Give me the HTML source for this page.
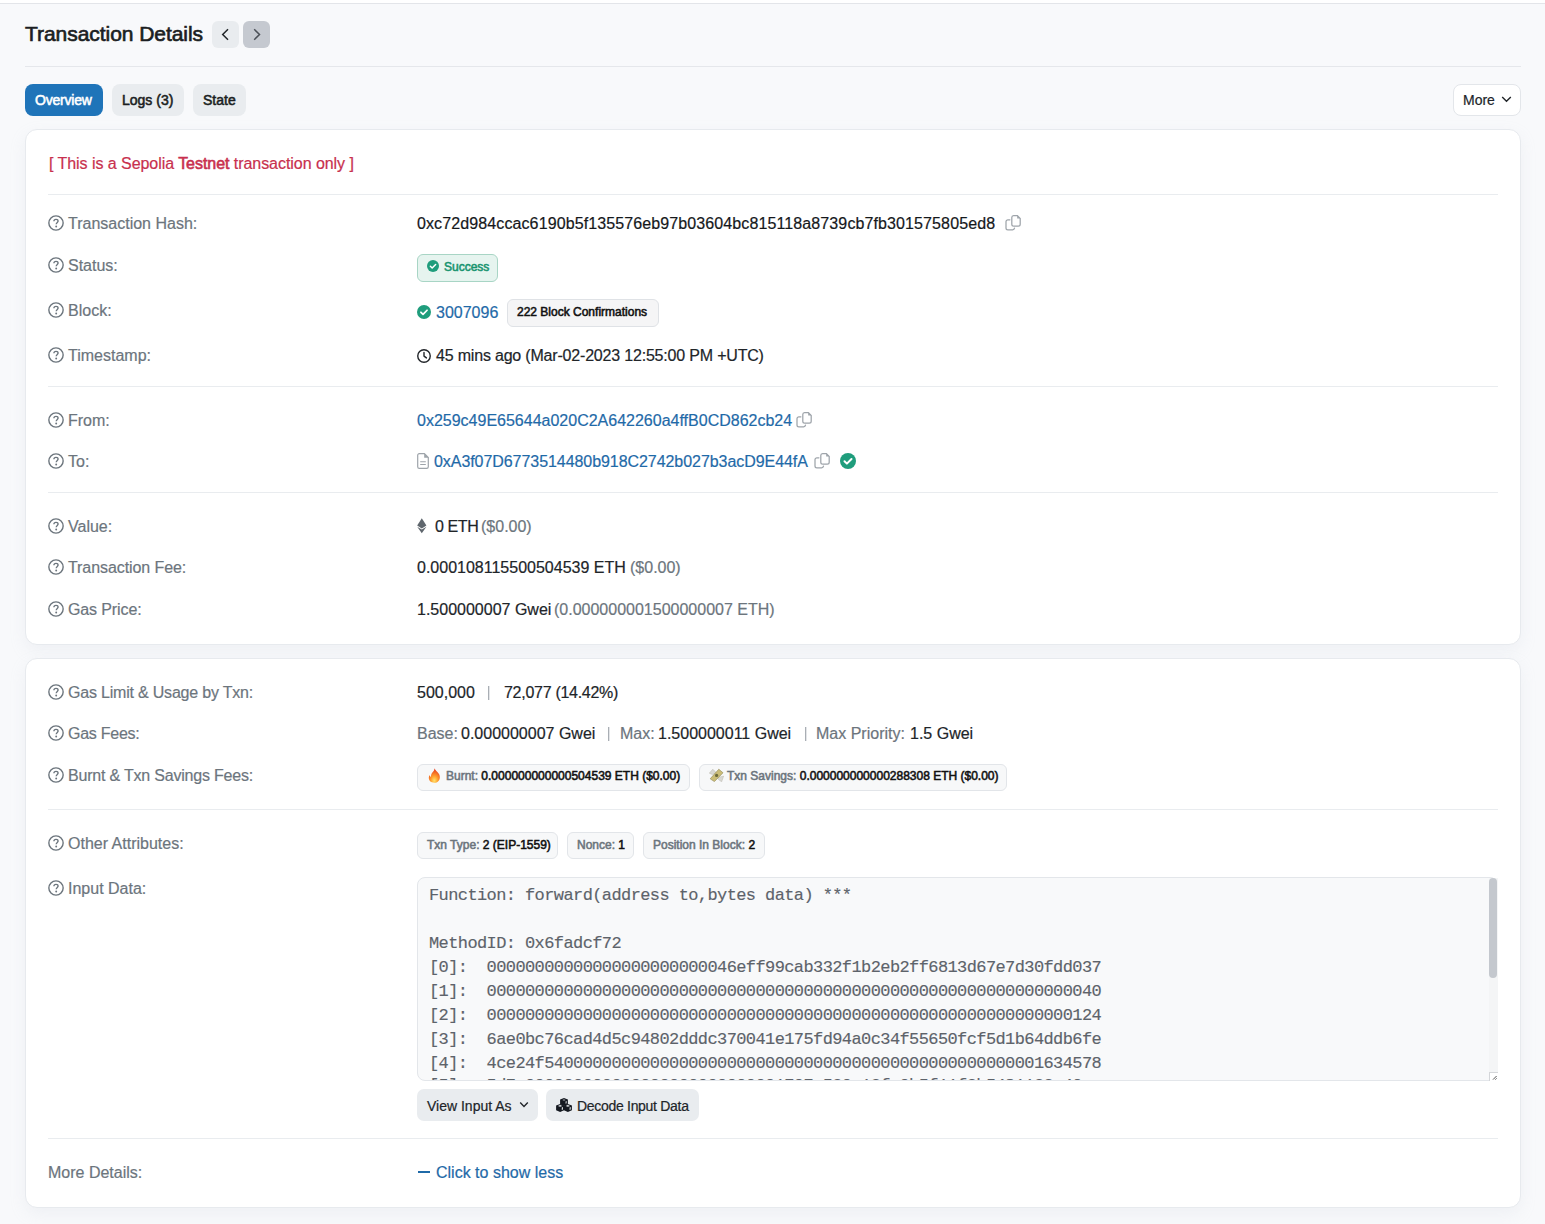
<!DOCTYPE html>
<html><head><meta charset="utf-8"><title>Transaction Details</title><style>
*{box-sizing:border-box}
html,body{margin:0;padding:0}
body{width:1545px;height:1224px;overflow:hidden;background:#f8f9fb;font-family:"Liberation Sans",sans-serif;color:#212529;position:relative;font-size:16px}
.a{position:absolute;white-space:nowrap}
.t{position:absolute;white-space:nowrap;height:20px;line-height:20px;font-size:16px;-webkit-text-stroke:0.2px currentColor}
.md{-webkit-text-stroke:0.55px currentColor}
.hr{position:absolute;height:1px;background:#e9ecef}
.card{position:absolute;left:25px;width:1496px;background:#fff;border:1px solid #e7eaee;border-radius:12px;box-shadow:0 6px 16px rgba(189,197,209,.15)}
.badge{position:absolute;border-radius:6px;border:1px solid #e2e5e9;background:#f7f8f9}
.bt{position:absolute;white-space:nowrap;font-size:12px;line-height:14px;height:14px;-webkit-text-stroke:0.55px currentColor}
.muted{color:#6c757d}
.link{color:#1f6aa8}
.sepl{position:absolute;width:1px;height:14px;background:#a9aeb4;box-shadow:1px 0 0 #e3e5e8}
.inbox{position:absolute;left:417px;top:877px;width:1081px;height:204px;background:#f8f9fa;border:1px solid #e3e6ea;border-radius:8px;overflow:hidden}
.code{margin:0;position:absolute;left:11px;top:6px;font-family:"Liberation Mono",monospace;font-size:17px;letter-spacing:-0.6px;line-height:24px;color:#5d636a;white-space:pre;-webkit-text-stroke:0.15px currentColor}
.btn{position:absolute;height:32px;border-radius:7px;background:#e9ecef}
</style></head><body>
<div class="a" style="left:0;top:0;width:1545px;height:3px;background:#fff"></div>
<div class="a" style="left:0;top:3px;width:1545px;height:1px;background:#e3e5e9"></div>
<div class="a" style="left:25px;top:19px;font-size:21px;line-height:30px;color:#1b1e22;-webkit-text-stroke:0.65px #1b1e22;letter-spacing:-0.05px">Transaction Details</div>
<div class="a" style="left:212px;top:21px;width:27px;height:27px;border-radius:6px;background:#e9ecef"></div>
<svg class="a" style="left:212px;top:21px" width="27" height="27" viewBox="0 0 27 27"><path d="M16 8.3 L10.7 13.5 L16 18.7" fill="none" stroke="#212529" stroke-width="1.5"/></svg>
<div class="a" style="left:243px;top:21px;width:27px;height:27px;border-radius:6px;background:#c5c9d0"></div>
<svg class="a" style="left:243px;top:21px" width="27" height="27" viewBox="0 0 27 27"><path d="M11.2 8.3 L16.5 13.5 L11.2 18.7" fill="none" stroke="#4b5057" stroke-width="1.5"/></svg>
<div class="hr" style="left:25px;top:66px;width:1496px;background:#e5e7eb"></div>
<div class="a" style="left:25px;top:84px;width:78px;height:32px;border-radius:8px;background:#1f74b9"></div>
<div class="a md" style="left:35px;top:92px;font-size:14px;line-height:17px;color:#fff;-webkit-text-stroke:0.55px #fff;letter-spacing:-0.2px">Overview</div>
<div class="a" style="left:112px;top:84px;width:72px;height:32px;border-radius:8px;background:#e9ecef"></div>
<div class="a md" style="left:122px;top:92px;font-size:14px;line-height:17px;color:#1b1e22">Logs (3)</div>
<div class="a" style="left:193px;top:84px;width:53px;height:32px;border-radius:8px;background:#e9ecef"></div>
<div class="a md" style="left:203px;top:92px;font-size:14px;line-height:17px;color:#1b1e22">State</div>
<div class="a" style="left:1453px;top:84px;width:68px;height:32px;border-radius:8px;background:#fff;border:1px solid #e3e6ea"></div>
<div class="a" style="left:1463px;top:92px;font-size:14px;line-height:17px;color:#212529;-webkit-text-stroke:0.2px #212529">More</div>
<svg class="a" style="left:1501px;top:95px" width="11" height="8" viewBox="0 0 11 8"><path d="M1.2 2 L5.5 6.2 L9.8 2" fill="none" stroke="#212529" stroke-width="1.4"/></svg>
<div class="card" style="top:129px;height:516px"></div>
<div class="t" style="left:49px;top:154px;color:#c8304e;letter-spacing:-0.05px">[ This is a Sepolia <span style="-webkit-text-stroke:0.6px currentColor">Testnet</span> transaction only ]</div>
<div class="hr" style="left:48px;top:194px;width:1450px"></div>
<svg class="a" style="left:48px;top:215px" width="16" height="16" viewBox="0 0 16 16"><circle cx="8" cy="8" r="7.15" fill="none" stroke="#6c757d" stroke-width="1.4"/><path d="M5.9 6.3 C5.9 5 6.8 4.3 8 4.3 C9.2 4.3 10.1 5.1 10.1 6.1 C10.1 7.3 8.2 7.6 8.2 9.2" fill="none" stroke="#6c757d" stroke-width="1.35"/><circle cx="8.2" cy="11.5" r="0.95" fill="#6c757d"/></svg>
<div class="t muted" style="left:68px;top:214px;letter-spacing:0px">Transaction Hash:</div>
<div class="t " style="left:417px;top:214px;letter-spacing:0.11px;color:#15181b">0xc72d984ccac6190b5f135576eb97b03604bc815118a8739cb7fb301575805ed8</div>
<svg class="a" style="left:1004px;top:213px" width="18" height="18" viewBox="0 0 18 18"><path d="M9.6 2.6 H13.4 L16.2 5.4 V11.3 A1.9 1.9 0 0 1 14.3 13.2 H9.7 A1.9 1.9 0 0 1 7.8 11.3 V4.5 A1.9 1.9 0 0 1 9.6 2.6 Z" fill="none" stroke="#9ea4aa" stroke-width="1.25"/><path d="M13.2 2.4 L16.4 5.6 H13.2 Z" fill="#9ea4aa"/><path d="M5.9 6.8 H3.9 A1.9 1.9 0 0 0 2 8.7 V14.9 A1.9 1.9 0 0 0 3.9 16.8 H8.6 A1.9 1.9 0 0 0 10.5 15.2" fill="none" stroke="#9ea4aa" stroke-width="1.25" stroke-linecap="round"/></svg>
<svg class="a" style="left:48px;top:257px" width="16" height="16" viewBox="0 0 16 16"><circle cx="8" cy="8" r="7.15" fill="none" stroke="#6c757d" stroke-width="1.4"/><path d="M5.9 6.3 C5.9 5 6.8 4.3 8 4.3 C9.2 4.3 10.1 5.1 10.1 6.1 C10.1 7.3 8.2 7.6 8.2 9.2" fill="none" stroke="#6c757d" stroke-width="1.35"/><circle cx="8.2" cy="11.5" r="0.95" fill="#6c757d"/></svg>
<div class="t muted" style="left:68px;top:256px;letter-spacing:0px">Status:</div>
<div class="badge" style="left:417px;top:254px;width:81px;height:28px;background:#e6f4ef;border-color:#a8d5c5;"></div>
<svg class="a" style="left:427px;top:260px" width="12" height="12" viewBox="0 0 16 16"><circle cx="8" cy="8" r="8" fill="#1f9d7c"/><path d="M4.5 8.3 L6.9 10.6 L11.5 6" fill="none" stroke="#fff" stroke-width="2" stroke-linecap="round" stroke-linejoin="round"/></svg>
<div class="bt" style="left:444px;top:260px;color:#199470">Success</div>
<svg class="a" style="left:48px;top:302px" width="16" height="16" viewBox="0 0 16 16"><circle cx="8" cy="8" r="7.15" fill="none" stroke="#6c757d" stroke-width="1.4"/><path d="M5.9 6.3 C5.9 5 6.8 4.3 8 4.3 C9.2 4.3 10.1 5.1 10.1 6.1 C10.1 7.3 8.2 7.6 8.2 9.2" fill="none" stroke="#6c757d" stroke-width="1.35"/><circle cx="8.2" cy="11.5" r="0.95" fill="#6c757d"/></svg>
<div class="t muted" style="left:68px;top:301px;letter-spacing:0px">Block:</div>
<svg class="a" style="left:417px;top:305px" width="14" height="14" viewBox="0 0 16 16"><circle cx="8" cy="8" r="8" fill="#1f9d7c"/><path d="M4.5 8.3 L6.9 10.6 L11.5 6" fill="none" stroke="#fff" stroke-width="2" stroke-linecap="round" stroke-linejoin="round"/></svg>
<div class="t link" style="left:436px;top:303px;">3007096</div>
<div class="badge" style="left:507px;top:299px;width:152px;height:28px;background:#f5f5f6;border-color:#dfe2e6;"></div>
<div class="bt" style="left:517px;top:305px;color:#111">222 Block Confirmations</div>
<svg class="a" style="left:48px;top:347px" width="16" height="16" viewBox="0 0 16 16"><circle cx="8" cy="8" r="7.15" fill="none" stroke="#6c757d" stroke-width="1.4"/><path d="M5.9 6.3 C5.9 5 6.8 4.3 8 4.3 C9.2 4.3 10.1 5.1 10.1 6.1 C10.1 7.3 8.2 7.6 8.2 9.2" fill="none" stroke="#6c757d" stroke-width="1.35"/><circle cx="8.2" cy="11.5" r="0.95" fill="#6c757d"/></svg>
<div class="t muted" style="left:68px;top:346px;letter-spacing:0px">Timestamp:</div>
<svg class="a" style="left:417px;top:349px" width="14" height="14" viewBox="0 0 14 14"><circle cx="7" cy="7" r="6.25" fill="none" stroke="#212529" stroke-width="1.4"/><path d="M7 3.4 V7.1 L9.4 8.9" fill="none" stroke="#212529" stroke-width="1.4" stroke-linecap="round" stroke-linejoin="round"/></svg>
<div class="t " style="left:436px;top:346px;letter-spacing:-0.19px">45 mins ago (Mar-02-2023 12:55:00 PM +UTC)</div>
<div class="hr" style="left:48px;top:386px;width:1450px"></div>
<svg class="a" style="left:48px;top:412px" width="16" height="16" viewBox="0 0 16 16"><circle cx="8" cy="8" r="7.15" fill="none" stroke="#6c757d" stroke-width="1.4"/><path d="M5.9 6.3 C5.9 5 6.8 4.3 8 4.3 C9.2 4.3 10.1 5.1 10.1 6.1 C10.1 7.3 8.2 7.6 8.2 9.2" fill="none" stroke="#6c757d" stroke-width="1.35"/><circle cx="8.2" cy="11.5" r="0.95" fill="#6c757d"/></svg>
<div class="t muted" style="left:68px;top:411px;letter-spacing:0px">From:</div>
<div class="t link" style="left:417px;top:411px;">0x259c49E65644a020C2A642260a4ffB0CD862cb24</div>
<svg class="a" style="left:795px;top:410px" width="18" height="18" viewBox="0 0 18 18"><path d="M9.6 2.6 H13.4 L16.2 5.4 V11.3 A1.9 1.9 0 0 1 14.3 13.2 H9.7 A1.9 1.9 0 0 1 7.8 11.3 V4.5 A1.9 1.9 0 0 1 9.6 2.6 Z" fill="none" stroke="#9ea4aa" stroke-width="1.25"/><path d="M13.2 2.4 L16.4 5.6 H13.2 Z" fill="#9ea4aa"/><path d="M5.9 6.8 H3.9 A1.9 1.9 0 0 0 2 8.7 V14.9 A1.9 1.9 0 0 0 3.9 16.8 H8.6 A1.9 1.9 0 0 0 10.5 15.2" fill="none" stroke="#9ea4aa" stroke-width="1.25" stroke-linecap="round"/></svg>
<svg class="a" style="left:48px;top:453px" width="16" height="16" viewBox="0 0 16 16"><circle cx="8" cy="8" r="7.15" fill="none" stroke="#6c757d" stroke-width="1.4"/><path d="M5.9 6.3 C5.9 5 6.8 4.3 8 4.3 C9.2 4.3 10.1 5.1 10.1 6.1 C10.1 7.3 8.2 7.6 8.2 9.2" fill="none" stroke="#6c757d" stroke-width="1.35"/><circle cx="8.2" cy="11.5" r="0.95" fill="#6c757d"/></svg>
<div class="t muted" style="left:68px;top:452px;letter-spacing:0px">To:</div>
<svg class="a" style="left:417px;top:453px" width="12" height="16" viewBox="0 0 12 16"><path d="M2.3 0.7 H7.4 L11.3 4.6 V13.7 A1.6 1.6 0 0 1 9.7 15.3 H2.3 A1.6 1.6 0 0 1 0.7 13.7 V2.3 A1.6 1.6 0 0 1 2.3 0.7 Z" fill="none" stroke="#9ea4aa" stroke-width="1.2"/><path d="M7.2 0.6 L11.4 4.8 H7.2 Z" fill="#9ea4aa"/><path d="M3.2 8.8 H8.8 M3.2 11.5 H8.8" stroke="#9ea4aa" stroke-width="1.1"/></svg>
<div class="t link" style="left:434px;top:452px;letter-spacing:-0.06px">0xA3f07D6773514480b918C2742b027b3acD9E44fA</div>
<svg class="a" style="left:813px;top:451px" width="18" height="18" viewBox="0 0 18 18"><path d="M9.6 2.6 H13.4 L16.2 5.4 V11.3 A1.9 1.9 0 0 1 14.3 13.2 H9.7 A1.9 1.9 0 0 1 7.8 11.3 V4.5 A1.9 1.9 0 0 1 9.6 2.6 Z" fill="none" stroke="#9ea4aa" stroke-width="1.25"/><path d="M13.2 2.4 L16.4 5.6 H13.2 Z" fill="#9ea4aa"/><path d="M5.9 6.8 H3.9 A1.9 1.9 0 0 0 2 8.7 V14.9 A1.9 1.9 0 0 0 3.9 16.8 H8.6 A1.9 1.9 0 0 0 10.5 15.2" fill="none" stroke="#9ea4aa" stroke-width="1.25" stroke-linecap="round"/></svg>
<svg class="a" style="left:840px;top:453px" width="16" height="16" viewBox="0 0 16 16"><circle cx="8" cy="8" r="8" fill="#1f9d7c"/><path d="M4.5 8.3 L6.9 10.6 L11.5 6" fill="none" stroke="#fff" stroke-width="2" stroke-linecap="round" stroke-linejoin="round"/></svg>
<div class="hr" style="left:48px;top:492px;width:1450px"></div>
<svg class="a" style="left:48px;top:518px" width="16" height="16" viewBox="0 0 16 16"><circle cx="8" cy="8" r="7.15" fill="none" stroke="#6c757d" stroke-width="1.4"/><path d="M5.9 6.3 C5.9 5 6.8 4.3 8 4.3 C9.2 4.3 10.1 5.1 10.1 6.1 C10.1 7.3 8.2 7.6 8.2 9.2" fill="none" stroke="#6c757d" stroke-width="1.35"/><circle cx="8.2" cy="11.5" r="0.95" fill="#6c757d"/></svg>
<div class="t muted" style="left:68px;top:517px;letter-spacing:0px">Value:</div>
<svg class="a" style="left:417px;top:518px" width="10" height="16" viewBox="0 0 10 16"><path d="M4.8 0.3 L9.4 7.6 L4.8 10.4 L0.2 7.6 Z" fill="#5f666d"/><path d="M4.8 11.4 L9.4 8.7 L4.8 15.2 L0.2 8.7 Z" fill="#5f666d"/></svg>
<div class="t " style="left:435px;top:517px;letter-spacing:-0.4px">0 ETH</div>
<div class="t muted" style="left:481px;top:517px;">($0.00)</div>
<svg class="a" style="left:48px;top:559px" width="16" height="16" viewBox="0 0 16 16"><circle cx="8" cy="8" r="7.15" fill="none" stroke="#6c757d" stroke-width="1.4"/><path d="M5.9 6.3 C5.9 5 6.8 4.3 8 4.3 C9.2 4.3 10.1 5.1 10.1 6.1 C10.1 7.3 8.2 7.6 8.2 9.2" fill="none" stroke="#6c757d" stroke-width="1.35"/><circle cx="8.2" cy="11.5" r="0.95" fill="#6c757d"/></svg>
<div class="t muted" style="left:68px;top:558px;letter-spacing:-0.08px">Transaction Fee:</div>
<div class="t " style="left:417px;top:558px;">0.000108115500504539 ETH</div>
<div class="t muted" style="left:630px;top:558px;">($0.00)</div>
<svg class="a" style="left:48px;top:601px" width="16" height="16" viewBox="0 0 16 16"><circle cx="8" cy="8" r="7.15" fill="none" stroke="#6c757d" stroke-width="1.4"/><path d="M5.9 6.3 C5.9 5 6.8 4.3 8 4.3 C9.2 4.3 10.1 5.1 10.1 6.1 C10.1 7.3 8.2 7.6 8.2 9.2" fill="none" stroke="#6c757d" stroke-width="1.35"/><circle cx="8.2" cy="11.5" r="0.95" fill="#6c757d"/></svg>
<div class="t muted" style="left:68px;top:600px;letter-spacing:-0.12px">Gas Price:</div>
<div class="t " style="left:417px;top:600px;">1.500000007 Gwei</div>
<div class="t muted" style="left:554px;top:600px;">(0.000000001500000007 ETH)</div>
<div class="card" style="top:658px;height:550px"></div>
<svg class="a" style="left:48px;top:684px" width="16" height="16" viewBox="0 0 16 16"><circle cx="8" cy="8" r="7.15" fill="none" stroke="#6c757d" stroke-width="1.4"/><path d="M5.9 6.3 C5.9 5 6.8 4.3 8 4.3 C9.2 4.3 10.1 5.1 10.1 6.1 C10.1 7.3 8.2 7.6 8.2 9.2" fill="none" stroke="#6c757d" stroke-width="1.35"/><circle cx="8.2" cy="11.5" r="0.95" fill="#6c757d"/></svg>
<div class="t muted" style="left:68px;top:683px;letter-spacing:-0.2px">Gas Limit &amp; Usage by Txn:</div>
<div class="t " style="left:417px;top:683px;">500,000</div>
<div class="sepl" style="left:488px;top:686px"></div>
<div class="t " style="left:504px;top:683px;letter-spacing:-0.28px">72,077 (14.42%)</div>
<svg class="a" style="left:48px;top:725px" width="16" height="16" viewBox="0 0 16 16"><circle cx="8" cy="8" r="7.15" fill="none" stroke="#6c757d" stroke-width="1.4"/><path d="M5.9 6.3 C5.9 5 6.8 4.3 8 4.3 C9.2 4.3 10.1 5.1 10.1 6.1 C10.1 7.3 8.2 7.6 8.2 9.2" fill="none" stroke="#6c757d" stroke-width="1.35"/><circle cx="8.2" cy="11.5" r="0.95" fill="#6c757d"/></svg>
<div class="t muted" style="left:68px;top:724px;letter-spacing:-0.25px">Gas Fees:</div>
<div class="t muted" style="left:417px;top:724px;">Base:</div>
<div class="t " style="left:461px;top:724px;">0.000000007 Gwei</div>
<div class="sepl" style="left:608px;top:727px"></div>
<div class="t muted" style="left:620px;top:724px;">Max:</div>
<div class="t " style="left:658px;top:724px;">1.500000011 Gwei</div>
<div class="sepl" style="left:805px;top:727px"></div>
<div class="t muted" style="left:816px;top:724px;">Max Priority:</div>
<div class="t " style="left:910px;top:724px;">1.5 Gwei</div>
<svg class="a" style="left:48px;top:767px" width="16" height="16" viewBox="0 0 16 16"><circle cx="8" cy="8" r="7.15" fill="none" stroke="#6c757d" stroke-width="1.4"/><path d="M5.9 6.3 C5.9 5 6.8 4.3 8 4.3 C9.2 4.3 10.1 5.1 10.1 6.1 C10.1 7.3 8.2 7.6 8.2 9.2" fill="none" stroke="#6c757d" stroke-width="1.35"/><circle cx="8.2" cy="11.5" r="0.95" fill="#6c757d"/></svg>
<div class="t muted" style="left:68px;top:766px;letter-spacing:-0.2px">Burnt &amp; Txn Savings Fees:</div>
<div class="badge" style="left:417px;top:764px;width:273px;height:27px;"></div>
<svg class="a" style="left:428px;top:768px" width="13" height="15" viewBox="0 0 13 15"><defs><radialGradient id="fg" cx="0.5" cy="0.85" r="0.75"><stop offset="0" stop-color="#ffe36a"/><stop offset="0.45" stop-color="#ff9a2a"/><stop offset="1" stop-color="#e8431f"/></radialGradient></defs><path d="M6.3 0.3 C7.2 2.2 9.4 3.6 10.8 5.8 C12.6 8.6 12.2 12.8 8.6 14.4 C7.6 14.8 5.2 14.9 3.9 14.3 C0.6 12.8 0.2 9.2 1.6 6.9 C1.8 8 2.4 8.6 3 8.8 C2.6 6.2 4.6 4.2 5.8 2.8 C6.3 2.2 6.5 1.2 6.3 0.3 Z" fill="url(#fg)"/></svg>
<div class="bt" style="left:446px;top:769px;color:#111"><span class="muted">Burnt:</span> 0.000000000000504539 ETH ($0.00)</div>
<div class="badge" style="left:699px;top:764px;width:308px;height:27px;"></div>
<svg class="a" style="left:709px;top:768px" width="15" height="14" viewBox="0 0 15 14"><path d="M0.3 5.2 L3.8 1.2 L7.2 4.6 L3.6 6.6 Z" fill="#d9d8d2" stroke="#b8b6ad" stroke-width="0.5"/><path d="M8.4 9.4 L14.6 8.2 L12.6 13.8 L9.6 11.6 Z" fill="#d9d8d2" stroke="#b8b6ad" stroke-width="0.5"/><path d="M1.2 10.8 L9.8 1.2 L14 4.8 L5.4 13.6 Z" fill="#cbbd77" stroke="#8f8450" stroke-width="0.6"/><circle cx="7.6" cy="7.4" r="1.6" fill="#6d6a3a"/></svg>
<div class="bt" style="left:727px;top:769px;color:#111"><span class="muted">Txn Savings:</span> 0.000000000000288308 ETH ($0.00)</div>
<div class="hr" style="left:48px;top:809px;width:1450px"></div>
<svg class="a" style="left:48px;top:835px" width="16" height="16" viewBox="0 0 16 16"><circle cx="8" cy="8" r="7.15" fill="none" stroke="#6c757d" stroke-width="1.4"/><path d="M5.9 6.3 C5.9 5 6.8 4.3 8 4.3 C9.2 4.3 10.1 5.1 10.1 6.1 C10.1 7.3 8.2 7.6 8.2 9.2" fill="none" stroke="#6c757d" stroke-width="1.35"/><circle cx="8.2" cy="11.5" r="0.95" fill="#6c757d"/></svg>
<div class="t muted" style="left:68px;top:834px;letter-spacing:0px">Other Attributes:</div>
<div class="badge" style="left:417px;top:832px;width:141px;height:27px;"></div>
<div class="bt" style="left:427px;top:838px;color:#111"><span class="muted">Txn Type:</span> 2 (EIP-1559)</div>
<div class="badge" style="left:567px;top:832px;width:67px;height:27px;"></div>
<div class="bt" style="left:577px;top:838px;color:#111"><span class="muted">Nonce:</span> 1</div>
<div class="badge" style="left:643px;top:832px;width:122px;height:27px;"></div>
<div class="bt" style="left:653px;top:838px;color:#111"><span class="muted">Position In Block:</span> 2</div>
<svg class="a" style="left:48px;top:880px" width="16" height="16" viewBox="0 0 16 16"><circle cx="8" cy="8" r="7.15" fill="none" stroke="#6c757d" stroke-width="1.4"/><path d="M5.9 6.3 C5.9 5 6.8 4.3 8 4.3 C9.2 4.3 10.1 5.1 10.1 6.1 C10.1 7.3 8.2 7.6 8.2 9.2" fill="none" stroke="#6c757d" stroke-width="1.35"/><circle cx="8.2" cy="11.5" r="0.95" fill="#6c757d"/></svg>
<div class="t muted" style="left:68px;top:879px;letter-spacing:0px">Input Data:</div>
<div class="inbox"><pre class="code">Function: forward(address to,bytes data) ***

MethodID: 0x6fadcf72
[0]:  00000000000000000000000046eff99cab332f1b2eb2ff6813d67e7d30fdd037
[1]:  0000000000000000000000000000000000000000000000000000000000000040
[2]:  0000000000000000000000000000000000000000000000000000000000000124
[3]:  6ae0bc76cad4d5c94802dddc370041e175fd94a0c34f55650fcf5d1b64ddb6fe
[4]:  4ce24f5400000000000000000000000000000000000000000000000001634578</pre><pre class="code" style="top:196px">[5]:  5d7c000000000000000000000000001707c530c13fc0b5f11f3b5481132c40</pre></div>
<div class="a" style="left:1489px;top:878px;width:9px;height:194px;background:#f4f5f6"></div>
<div class="a" style="left:1489px;top:878px;width:8px;height:100px;border-radius:4px;background:#c4c8ce"></div>
<div class="a" style="left:1489px;top:1072px;width:9px;height:9px;background:#fff;border-left:1px solid #d4d6d9;border-top:1px solid #d4d6d9"></div>
<svg class="a" style="left:1492px;top:1075px" width="6" height="6" viewBox="0 0 6 6"><path d="M1 4.6 L4.6 1 M3.4 4.6 L4.6 3.4" stroke="#555" stroke-width="1"/></svg>
<div class="btn" style="left:417px;top:1089px;width:121px"></div>
<div class="a" style="left:427px;top:1098px;font-size:14px;line-height:17px;color:#212529;-webkit-text-stroke:0.2px #212529">View Input As</div>
<svg class="a" style="left:519px;top:1101px" width="10" height="8" viewBox="0 0 10 8"><path d="M1.2 1.6 L5 5.4 L8.8 1.6" fill="none" stroke="#212529" stroke-width="1.4"/></svg>
<div class="btn" style="left:546px;top:1089px;width:153px"></div>
<svg class="a" style="left:556px;top:1098px" width="16" height="14" viewBox="0 0 16 14"><g fill="#141820"><path d="M8 0.1 L11.9 1.6 V6.3 L8 7.9 L4.1 6.3 V1.6 Z"/><path d="M4.1 5.9 L8.1 7.5 V12.3 L4.1 13.9 L0.1 12.3 V7.5 Z"/><path d="M11.9 5.9 L15.9 7.5 V12.3 L11.9 13.9 L7.9 12.3 V7.5 Z"/></g><g fill="#e9ecef"><path d="M8 1.4 L9.6 2 L8 2.6 L6.4 2 Z"/><path d="M9.6 3.4 L10.6 3 V5.2 L9.6 5.7 Z"/><path d="M4.1 7.1 L6.3 7.9 L4.1 8.7 L1.9 7.9 Z"/><path d="M5.8 9.5 L6.9 9 V11.6 L5.8 12.1 Z"/><path d="M11.9 7.1 L14.1 7.9 L11.9 8.7 L9.7 7.9 Z"/><path d="M13.6 9.5 L14.7 9 V11.6 L13.6 12.1 Z"/></g></svg>
<div class="a" style="left:577px;top:1098px;font-size:14px;line-height:17px;letter-spacing:-0.3px;color:#212529;-webkit-text-stroke:0.2px #212529">Decode Input Data</div>
<div class="hr" style="left:48px;top:1138px;width:1450px"></div>
<div class="t muted" style="left:48px;top:1163px">More Details:</div>
<div class="a" style="left:418px;top:1171px;width:12px;height:2px;background:#1f6aa8"></div>
<div class="t link" style="left:436px;top:1163px;">Click to show less</div>
</body></html>
